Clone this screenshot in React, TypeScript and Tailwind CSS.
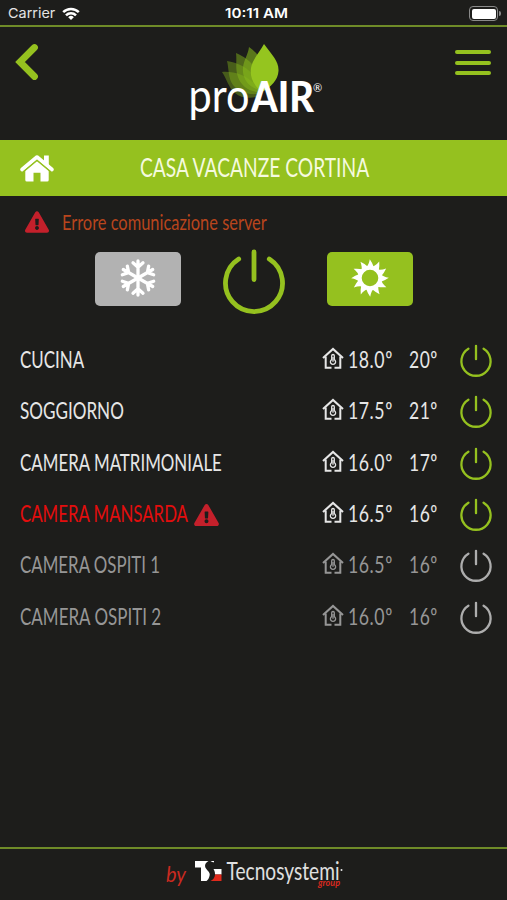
import { useLayoutEffect, useRef } from 'react';
import type { ReactNode } from 'react';
import { FaExclamationTriangle } from 'react-icons/fa';

// Condenses its text horizontally so that it fills exactly `width` pixels.
function Condensed({ width, className = '', children }: { width: number; className?: string; children: ReactNode }) {
  const inner = useRef<HTMLSpanElement>(null);
  useLayoutEffect(() => {
    const el = inner.current;
    if (el) el.style.transform = `scaleX(${width / el.offsetWidth})`;
  }, [width, children]);
  return (
    <span className={`block shrink-0 ${className}`} style={{ width }}>
      <span ref={inner} className="inline-block origin-left whitespace-nowrap">
        {children}
      </span>
    </span>
  );
}

function PowerIcon({ className }: { className: string }) {
  return (
    <svg viewBox="0 0 34 34" className={className} fill="none" stroke="currentColor" strokeWidth="2.3" strokeLinecap="round">
      <path d="M9.4 4.7a14.6 14.6 0 1 0 15.2 0M17 1.800v13.400" />
    </svg>
  );
}

function HomeIcon() {
  return (
    <svg viewBox="0 0 36 30" className="h-[30px] w-9" fill="white">
      <path d="M3 16.500 18 4l15 12.500" fill="none" stroke="white" strokeWidth="3.600" strokeLinecap="round" strokeLinejoin="round" />
      <path d="M25 2.500h4.800v10L25 8.500Z" />
      <path d="M6.300 17.500 18 7.800l11.700 9.700V27a1.500 1.500 0 0 1-1.500 1.500h-6.700v-8.800h-7v8.800H7.800A1.500 1.500 0 0 1 6.300 27Z" />
      <path d="M4.800 18.500 18 7.500l13.200 11" fill="none" stroke="#95c11f" strokeWidth="1.100" />
    </svg>
  );
}

function HouseTemp() {
  return (
    <svg viewBox="0 0 22 22" className="mb-[3px] h-[22px] w-[22px] shrink-0" fill="none" stroke="currentColor">
      <path d="M1 11 11 2l10 9" strokeWidth="2.100" />
      <path d="M3.700 9.500v11.300H9.500M12.500 20.800h5.800V9.500" strokeWidth="2" />
      <path d="M9.700 12.600V8.800a1.300 1.300 0 0 1 2.600 0v3.800a2.600 2.600 0 1 1-2.600 0Z" strokeWidth="1.300" />
      <path d="M11 10v4.800" strokeWidth="1.300" />
    </svg>
  );
}

function Snowflake() {
  return (
    <svg viewBox="-20 -20 40 40" className="h-10 w-10" fill="none" stroke="white" strokeWidth="3.3" strokeLinecap="round">
      {[0, 60, 120, 180, 240, 300].map((a) => (
        <path key={a} transform={`rotate(${a})`} d="M0 0V-17M-5-15.200 0-10.800 5-15.200" />
      ))}
    </svg>
  );
}

function Sun() {
  return (
    <svg viewBox="-20 -20 40 40" className="h-10 w-10">
      {Array.from({ length: 12 }, (_, i) => (
        <path key={i} transform={`rotate(${i * 30})`} fill="white" d="M-4-10.500Q-1.200-13-.2-18.800Q2.500-15 4-10.500Z" />
      ))}
      <circle r="10.200" fill="none" stroke="white" strokeWidth="3.800" />
    </svg>
  );
}

function ProAirLogo() {
  return (
    <svg viewBox="0 0 140 90" className="h-[90px] w-[140px] overflow-visible">
      <g fill="#86b81b">
        <path d="M38 34C50 33 68 37 78 57C70 61 58 61 51 55C44 49 43 41 38 34Z" fillOpacity=".4" />
        <path d="M43 23C56 25 72 32 78 55C68 58 55 55 49 47C44 40 45 31 43 23Z" fillOpacity=".42" />
        <path d="M52 15C64 20 77 30 78 54C66 55 57 48 54 39C51 31 53 23 52 15Z" fillOpacity=".48" />
        <path d="M65 9C75 16 85 28 78 53C67 50 60 44 59 34C58 24 64 18 65 9Z" fillOpacity=".58" />
      </g>
      <path d="M80 6C88 17 95 23 94.500 33C94 42 87 49 78 54C68 46 66 38 67 30C68 22 75 15 80 6Z" fill="#95c51f" />
      <g fill="white" fontFamily="Lato, sans-serif">
        <text x="4.500" y="73.500" fontSize="47" textLength="61" lengthAdjust="spacingAndGlyphs">pro</text>
        <text x="67" y="73.500" fontSize="41.500" fontWeight="900" textLength="63" lengthAdjust="spacingAndGlyphs">AIR</text>
        <text x="129" y="53.500" fontSize="11">®</text>
      </g>
    </svg>
  );
}

function TecnosystemiLogo() {
  return (
    <svg viewBox="0 0 180 40" className="h-10 w-[180px] overflow-visible">
      <g fontFamily="Lato, sans-serif">
        <text x="2" y="29" fontSize="22" fontStyle="italic" fill="#c92a20" textLength="20" lengthAdjust="spacingAndGlyphs">by</text>
        <text x="62.500" y="27" fontSize="25" fill="#e0e0e0" textLength="113" lengthAdjust="spacingAndGlyphs">Tecnosystemi</text>
        <text x="154" y="32.500" fontSize="9" fontStyle="italic" fontWeight="700" fill="#d8291f" textLength="22" lengthAdjust="spacingAndGlyphs">group</text>
      </g>
      <circle cx="177.500" cy="17" r="1" fill="#e6e6e6" />
      <path d="M31 8h13.500c-3 1.500-4.500 4.500-2.500 7.500s4.500 4 3.500 7.500c-.5 2-1.500 4-3 5h-5.500V14.500h-6Z" fill="white" />
      <path d="M46.500 8H50v1.200c-1 0-2.500-.2-3.500-1.200ZM49.500 16h8v5.500H51c0-2.500-.5-4-1.500-5.500Z" fill="white" />
      <path d="M51 21.500h6.500V28H46.500c3-1.500 4.500-4 4.500-6.500Z" fill="#e02a1c" />
    </svg>
  );
}

type Room = { name: string; width: number; temp: string; target: string; tone: string; power: string; alarm?: boolean };

const rooms: Room[] = [
  { name: 'CUCINA', width: 64, temp: '18.0º', target: '20º', tone: 'text-[#e6e6e6]', power: 'text-[#95c11f]' },
  { name: 'SOGGIORNO', width: 104, temp: '17.5º', target: '21º', tone: 'text-[#e6e6e6]', power: 'text-[#95c11f]' },
  { name: 'CAMERA MATRIMONIALE', width: 202, temp: '16.0º', target: '17º', tone: 'text-[#e6e6e6]', power: 'text-[#95c11f]' },
  { name: 'CAMERA MANSARDA', width: 168, temp: '16.5º', target: '16º', tone: 'text-[#e6e6e6]', power: 'text-[#95c11f]', alarm: true },
  { name: 'CAMERA OSPITI 1', width: 140, temp: '16.5º', target: '16º', tone: 'text-[#969696]', power: 'text-[#adadad]' },
  { name: 'CAMERA OSPITI 2', width: 141, temp: '16.0º', target: '16º', tone: 'text-[#969696]', power: 'text-[#adadad]' },
];

function RoomRow({ room }: { room: Room }) {
  return (
    <li className={`flex h-[51.300px] items-center pr-[14px] pl-[19.500px] text-[23.500px] ${room.tone}`}>
      <div className={`flex flex-1 items-center gap-[6px] ${room.alarm ? 'text-[#e30d0d]' : ''}`}>
        <Condensed width={room.width}>{room.name}</Condensed>
        {room.alarm && <FaExclamationTriangle className="mt-[2px] h-[22px] w-[25px] text-[#c4202b]" />}
      </div>
      <HouseTemp />
      <Condensed width={44.500} className="ml-[4px] tracking-[0.030em]">{room.temp}</Condensed>
      <Condensed width={29} className="ml-[16.500px] tracking-[0.030em]">{room.target}</Condensed>
      <PowerIcon className={`mt-[3px] ml-[21px] h-[34px] w-[34px] shrink-0 ${room.power}`} />
    </li>
  );
}

export default function App() {
  return (
    <div className="flex h-[900px] w-[507px] flex-col overflow-hidden bg-[#1d1d1b] font-['Lato',sans-serif] text-white">
      <div className="grid h-[27px] shrink-0 grid-cols-3 items-center border-b-2 border-[#6f8b28] pt-[2px] pr-[6px] pl-[8px] font-['Inter',sans-serif] text-[13.500px] text-[#e4e4e4]">
        <div className="flex items-center gap-[7px]">
          <Condensed width={47}>Carrier</Condensed>
          <svg viewBox="0 0 18 14" className="h-[14px] w-[18px]" fill="none" stroke="white" strokeWidth="2.500">
            <path d="M1.200 5.200a11 11 0 0 1 15.600 0M4 8.300a7 7 0 0 1 10 0" />
            <path d="M9 13 6.200 10.200a4 4 0 0 1 5.600 0Z" fill="white" stroke="none" />
          </svg>
        </div>
        <div className="flex justify-center pl-[4px] font-semibold text-white">
          <Condensed width={63}>10:11 AM</Condensed>
        </div>
        <div className="flex items-center justify-end gap-px">
          <div className="h-[15px] w-[29px] rounded-[4px] border border-[#8a8a8a] p-[1.500px]">
            <div className="h-full rounded-[2px] bg-white" />
          </div>
          <div className="h-[5px] w-[1.500px] rounded-r bg-[#8a8a8a]" />
        </div>
      </div>

      <header className="flex h-[113px] shrink-0 items-start justify-between pr-[16px] pl-[15px]">
        <button className="mt-[16px]" aria-label="Indietro">
          <svg viewBox="0 0 24 38" className="h-[38px] w-6" fill="none" stroke="#95c11f" strokeWidth="6.800" strokeLinecap="round">
            <path d="M19.500 4.500 5 19l14.500 14.500" strokeLinejoin="miter" />
          </svg>
        </button>
        <div className="mt-[11px] ml-[14px]">
          <ProAirLogo />
        </div>
        <button className="mt-[23px] flex flex-col gap-[6.500px]" aria-label="Menu">
          <span className="h-[4px] w-[36px] rounded-full bg-[#95c11f]" />
          <span className="h-[4px] w-[36px] rounded-full bg-[#95c11f]" />
          <span className="h-[4px] w-[36px] rounded-full bg-[#95c11f]" />
        </button>
      </header>

      <div className="flex h-[56px] shrink-0 items-center bg-[#95c11f] pl-[18.500px]">
        <HomeIcon />
        <Condensed width={229} className="ml-[85.500px] text-[26.500px] text-[#f5fadf]">CASA VACANZE CORTINA</Condensed>
      </div>

      <div className="flex h-[53px] shrink-0 items-center pl-[25px]">
        <FaExclamationTriangle className="mb-[2px] h-[22px] w-[24px] text-[#c4202b]" />
        <Condensed width={205} className="ml-[13px] text-[20.500px] text-[#b8451d]">Errore comunicazione server</Condensed>
      </div>

      <div className="flex h-[68px] shrink-0 items-center justify-center">
        <button className="mb-[9px] flex h-[54px] w-[86px] items-center justify-center rounded-[5px] bg-[#b2b2b2] pb-px" aria-label="Raffrescamento">
          <Snowflake />
        </button>
        <svg viewBox="0 0 66 66" className="mx-[40px] mb-[3px] h-[66px] w-[66px] text-[#95c11f]" fill="none" stroke="currentColor" strokeWidth="4.800" strokeLinecap="round">
          <path d="M17.700 10a28.500 28.500 0 1 0 30.600 0M33 3v27.500" />
        </svg>
        <button className="mb-[9px] flex h-[54px] w-[86px] items-center justify-center rounded-[5px] bg-[#95c11f] pb-px" aria-label="Riscaldamento">
          <Sun />
        </button>
      </div>

      <ul className="flex flex-1 flex-col pt-[17px]">
        {rooms.map((room) => (
          <RoomRow key={room.name} room={room} />
        ))}
      </ul>

      <footer className="flex h-[53px] shrink-0 justify-center border-t-2 border-[#6f8b28] pt-[4px]">
        <TecnosystemiLogo />
      </footer>
    </div>
  );
}
